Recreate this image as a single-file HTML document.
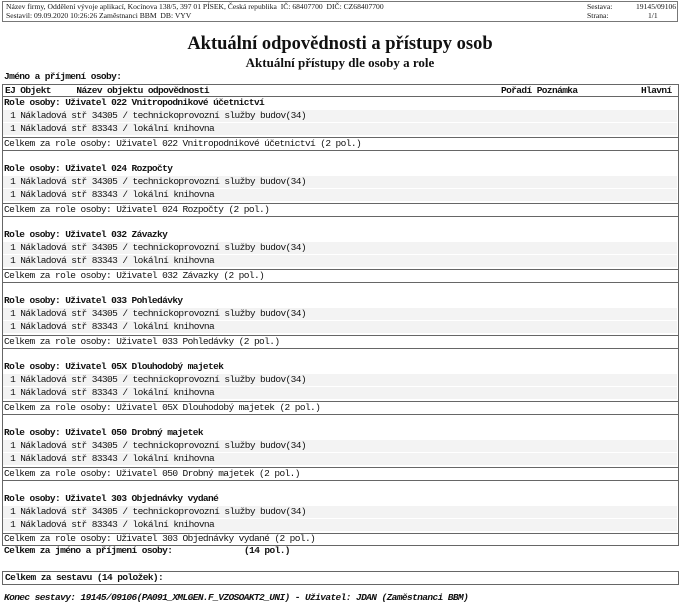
<!DOCTYPE html>
<html><head><meta charset="utf-8"><style>
body{margin:0;width:680px;height:604px;background:#fff;position:relative;overflow:hidden;font-family:"Liberation Mono",monospace;font-size:9.5px;letter-spacing:-0.6px;color:#111}
.a{position:absolute;white-space:pre;line-height:12px}
.hb{position:absolute;left:2px;top:1px;width:674px;height:19px;border:1px solid #777;font-family:"Liberation Serif",serif;font-size:7.6px;line-height:9.5px;letter-spacing:0}
.ser{font-family:"Liberation Serif",serif;font-weight:bold;position:absolute;left:0;width:680px;text-align:center;letter-spacing:0}
.box{position:absolute;left:2px;width:675px;border-left:1px solid #666;border-right:1px solid #666}
.hl{position:absolute;left:2px;width:676px;height:1px;background:#666}
.g{position:absolute;left:3px;width:674px;height:12px;background:#f3f3f3}
b{font-weight:bold}
</style></head><body>
<div class="hb">
<div style="position:absolute;left:3px;top:0">Název firmy, Oddělení vývoje aplikací, Kocínova 138/5, 397 01 PÍSEK, Česká republika &nbsp;IČ: 68407700 &nbsp;DIČ: CZ68407700</div>
<div style="position:absolute;left:3px;top:9px">Sestavil: 09.09.2020 10:26:26 Zaměstnanci BBM &nbsp;DB: VYV</div>
<div style="position:absolute;left:584px;top:0">Sestava:</div><div style="position:absolute;left:633px;top:0">19145/09106</div>
<div style="position:absolute;left:584px;top:9px">Strana:</div><div style="position:absolute;left:645px;top:9px">1/1</div>
</div>
<div class="ser" style="top:34px;font-size:18.5px">Aktuální odpovědnosti a přístupy osob</div>
<div class="ser" style="top:55px;font-size:13px">Aktuální přístupy dle osoby a role</div>
<div class="a" style="left:4px;top:71px"><b>Jméno a příjmení osoby:</b></div>
<div class="box" style="top:84px;height:461px;border-top:1px solid #666"></div>
<div class="a" style="left:5px;top:85px"><b>EJ Objekt     Název objektu odpovědnosti</b></div>
<div class="a" style="left:501px;top:85px"><b>Pořadí Poznámka</b></div>
<div class="a" style="left:641px;top:85px"><b>Hlavní</b></div>
<div class="hl" style="top:96px"></div>
<div class="a" style="left:4px;top:545px"><b>Celkem za jméno a příjmení osoby:</b></div>
<div class="a" style="left:244px;top:545px"><b>(14 pol.)</b></div>
<div class="box" style="top:571px;height:12px;border-top:1px solid #666;border-bottom:1px solid #666"></div>
<div class="a" style="left:5px;top:572px"><b>Celkem za sestavu (14 položek):</b></div>
<div class="a" style="left:4px;top:592px;font-style:italic;font-weight:bold">Konec sestavy: 19145/09106(PA091_XMLGEN.F_VZOSOAKT2_UNI) - Uživatel: JDAN (Zaměstnanci BBM)</div>

<div class="a" style="left:4px;top:97px"><b>Role osoby: Uživatel 022 Vnitropodnikové účetnictví</b></div>
<div class="g" style="top:110px"></div><div class="a" style="left:5px;top:110px"> 1 Nákladová stř 34305 / technickoprovozní služby budov(34)</div>
<div class="g" style="top:123px"></div><div class="a" style="left:5px;top:123px"> 1 Nákladová stř 83343 / lokální knihovna</div>
<div class="hl" style="top:137px"></div><div class="a" style="left:4px;top:138px">Celkem za role osoby: Uživatel 022 Vnitropodnikové účetnictví (2 pol.)</div><div class="hl" style="top:150px"></div>

<div class="a" style="left:4px;top:163px"><b>Role osoby: Uživatel 024 Rozpočty</b></div>
<div class="g" style="top:176px"></div><div class="a" style="left:5px;top:176px"> 1 Nákladová stř 34305 / technickoprovozní služby budov(34)</div>
<div class="g" style="top:189px"></div><div class="a" style="left:5px;top:189px"> 1 Nákladová stř 83343 / lokální knihovna</div>
<div class="hl" style="top:203px"></div><div class="a" style="left:4px;top:204px">Celkem za role osoby: Uživatel 024 Rozpočty (2 pol.)</div><div class="hl" style="top:216px"></div>

<div class="a" style="left:4px;top:229px"><b>Role osoby: Uživatel 032 Závazky</b></div>
<div class="g" style="top:242px"></div><div class="a" style="left:5px;top:242px"> 1 Nákladová stř 34305 / technickoprovozní služby budov(34)</div>
<div class="g" style="top:255px"></div><div class="a" style="left:5px;top:255px"> 1 Nákladová stř 83343 / lokální knihovna</div>
<div class="hl" style="top:269px"></div><div class="a" style="left:4px;top:270px">Celkem za role osoby: Uživatel 032 Závazky (2 pol.)</div><div class="hl" style="top:282px"></div>

<div class="a" style="left:4px;top:295px"><b>Role osoby: Uživatel 033 Pohledávky</b></div>
<div class="g" style="top:308px"></div><div class="a" style="left:5px;top:308px"> 1 Nákladová stř 34305 / technickoprovozní služby budov(34)</div>
<div class="g" style="top:321px"></div><div class="a" style="left:5px;top:321px"> 1 Nákladová stř 83343 / lokální knihovna</div>
<div class="hl" style="top:335px"></div><div class="a" style="left:4px;top:336px">Celkem za role osoby: Uživatel 033 Pohledávky (2 pol.)</div><div class="hl" style="top:348px"></div>

<div class="a" style="left:4px;top:361px"><b>Role osoby: Uživatel 05X Dlouhodobý majetek</b></div>
<div class="g" style="top:374px"></div><div class="a" style="left:5px;top:374px"> 1 Nákladová stř 34305 / technickoprovozní služby budov(34)</div>
<div class="g" style="top:387px"></div><div class="a" style="left:5px;top:387px"> 1 Nákladová stř 83343 / lokální knihovna</div>
<div class="hl" style="top:401px"></div><div class="a" style="left:4px;top:402px">Celkem za role osoby: Uživatel 05X Dlouhodobý majetek (2 pol.)</div><div class="hl" style="top:414px"></div>

<div class="a" style="left:4px;top:427px"><b>Role osoby: Uživatel 050 Drobný majetek</b></div>
<div class="g" style="top:440px"></div><div class="a" style="left:5px;top:440px"> 1 Nákladová stř 34305 / technickoprovozní služby budov(34)</div>
<div class="g" style="top:453px"></div><div class="a" style="left:5px;top:453px"> 1 Nákladová stř 83343 / lokální knihovna</div>
<div class="hl" style="top:467px"></div><div class="a" style="left:4px;top:468px">Celkem za role osoby: Uživatel 050 Drobný majetek (2 pol.)</div><div class="hl" style="top:480px"></div>

<div class="a" style="left:4px;top:493px"><b>Role osoby: Uživatel 303 Objednávky vydané</b></div>
<div class="g" style="top:506px"></div><div class="a" style="left:5px;top:506px"> 1 Nákladová stř 34305 / technickoprovozní služby budov(34)</div>
<div class="g" style="top:519px"></div><div class="a" style="left:5px;top:519px"> 1 Nákladová stř 83343 / lokální knihovna</div>
<div class="hl" style="top:533px"></div><div class="a" style="left:4px;top:533px">Celkem za role osoby: Uživatel 303 Objednávky vydané (2 pol.)</div><div class="hl" style="top:545px"></div>
</body></html>
